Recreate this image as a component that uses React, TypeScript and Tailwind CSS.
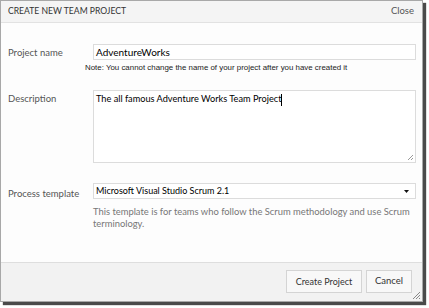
export default function App() {
  const font = { fontFamily: 'Lato, "Open Sans", sans-serif' }
  return (
    <div className="w-[429px] h-[308px] bg-white" style={font}>
      <div className="w-[423px] h-[302px] flex flex-col border border-[#a8a8a8] bg-[#fdfdfd] shadow-[3px_3px_1px_#4a4a4a]">
        {/* header */}
        <div className="h-[22px] flex items-center justify-between px-[7px] bg-[#f4f4f4] border-b border-[#e2e2e2] text-[#333]">
          <span className="text-[8.6px]">CREATE NEW TEAM PROJECT</span>
          <span className="text-[9.5px] text-[#555] mr-[1px]">Close</span>
        </div>

        {/* body */}
        <div className="flex-1 flex flex-col pl-[7px] pr-[6px] pt-[21px] text-[9.5px] text-[#333]">
          <div className="flex">
            <div className="w-[85px] text-[#555] leading-[16px] pt-[1px] whitespace-nowrap">Project name</div>
            <div className="flex-1 flex flex-col">
              <div className="h-[16px] border border-[#dcdcdc] bg-white px-[2px] text-[10px] leading-[14px] text-black">AdventureWorks</div>
              <div className="mt-[3px] -ml-[8px] text-[7.9px] leading-[10px] text-[#222] whitespace-nowrap font-['Liberation_Sans',sans-serif]">Note: You cannot change the name of your project after you have created it</div>
            </div>
          </div>

          <div className="flex mt-[17px]">
            <div className="w-[85px] text-[#555] leading-[16px] pt-[1px]">Description</div>
            <div className="relative flex-1 h-[73px] border border-[#dcdcdc] bg-white px-[2px] pt-[1px] text-[9.2px] leading-[14px] text-black">
              The all famous Adventure Works Team Project<span className="inline-block w-[1px] h-[12px] bg-black align-middle" />
              <svg className="absolute right-[1px] bottom-[1px]" width="7" height="7" viewBox="0 0 7 7">
                <path d="M6 1L1 6M6 4L4 6" stroke="#999" strokeWidth="1" />
              </svg>
            </div>
          </div>

          <div className="flex mt-[20px]">
            <div className="w-[85px] text-[#555] leading-[16px] pt-[3px] whitespace-nowrap">Process template</div>
            <div className="flex-1 flex flex-col">
              <div className="h-[16px] flex items-center justify-between border border-[#dcdcdc] bg-white px-[2px] text-[9px] text-black">
                <span>Microsoft Visual Studio Scrum 2.1</span>
                <svg width="5" height="3" viewBox="0 0 5 3" className="mr-[4px]">
                  <path d="M0 0H5L2.5 3Z" fill="#111" />
                </svg>
              </div>
              <div className="mt-[7px] text-[9.4px] leading-[12px] text-[#777]">This template is for teams who follow the Scrum methodology and use Scrum terminology.</div>
            </div>
          </div>
        </div>

        {/* footer */}
        <div className="relative h-[39px] flex items-start justify-end gap-[4px] pr-[10px] pt-[7px] bg-[#f2f2f2] border-t border-[#dedede] text-[9.5px] text-[#333]">
          <button className="w-[76px] h-[23px] border border-[#d4d4d4] bg-[#f8f8f8] text-[9px]">Create Project</button>
          <button className="w-[46px] h-[23px] border border-[#d4d4d4] bg-[#f8f8f8]">Cancel</button>
          <svg className="absolute right-[1px] bottom-[1px]" width="9" height="9" viewBox="0 0 9 9">
            <path d="M8 1L1 8M8 4L4 8M8 7L7 8" stroke="#888" strokeWidth="1" />
          </svg>
        </div>
      </div>
    </div>
  )
}
